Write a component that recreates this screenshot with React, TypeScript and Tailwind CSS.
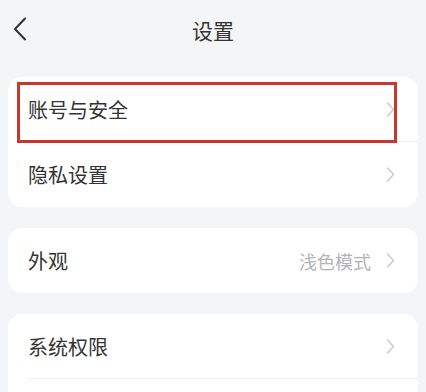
import React from "react";

type Row = { label: string; value?: string };

const groups: Row[][] = [
  [{ label: "账号与安全" }, { label: "隐私设置" }],
  [{ label: "外观", value: "浅色模式" }],
  [{ label: "系统权限" }, { label: "" }],
];

function Chevron() {
  return (
    <svg width="9" height="15" viewBox="0 0 9 15" fill="none" className="shrink-0">
      <path d="M1.5 1 L7.5 7.5 L1.5 14" stroke="#c9c9cc" strokeWidth="1.4" strokeLinecap="round" strokeLinejoin="round" />
    </svg>
  );
}

function SettingRow({ row, last }: { row: Row; last: boolean }) {
  return (
    <div className="relative flex h-[65px] items-center pl-[20px] pr-[23px]">
      <span className="flex-1 text-[20px] leading-none text-[#333333]">{row.label}</span>
      {row.value && <span className="mr-[15px] text-[18px] leading-none text-[#b4b4b8]">{row.value}</span>}
      <Chevron />
      {!last && <div className="absolute bottom-0 left-[20px] right-0 h-px bg-[#efeff1]" />}
    </div>
  );
}

export default function App() {
  return (
    <div
      className="relative h-[392px] w-[426px] overflow-hidden bg-[#f4f5f7]"
      style={{ fontFamily: '"Noto Sans CJK SC", "Noto Sans", sans-serif' }}
    >
      {/* Header */}
      <div className="relative flex h-[60px] items-center justify-center">
        <svg width="14" height="24" viewBox="0 0 14 24" fill="none" className="absolute left-[13px] top-[17px]">
          <path d="M12 1.5 L2 12 L12 22.5" stroke="#333333" strokeWidth="2" strokeLinecap="round" strokeLinejoin="round" />
        </svg>
        <span className="text-[21px] leading-none text-[#333333]">设置</span>
      </div>

      <div className="mt-[17px] flex flex-col gap-[21px] px-[8px]">
        {groups.map((rows, gi) => (
          <div key={gi} className="overflow-hidden rounded-[14px] bg-white">
            {rows.map((row, ri) => (
              <SettingRow key={ri} row={row} last={ri === rows.length - 1} />
            ))}
          </div>
        ))}
      </div>

      {/* Highlight annotation */}
      <div className="absolute left-[17px] top-[82px] h-[61px] w-[380px] border-[3px] border-[#c8372d]" />
    </div>
  );
}
